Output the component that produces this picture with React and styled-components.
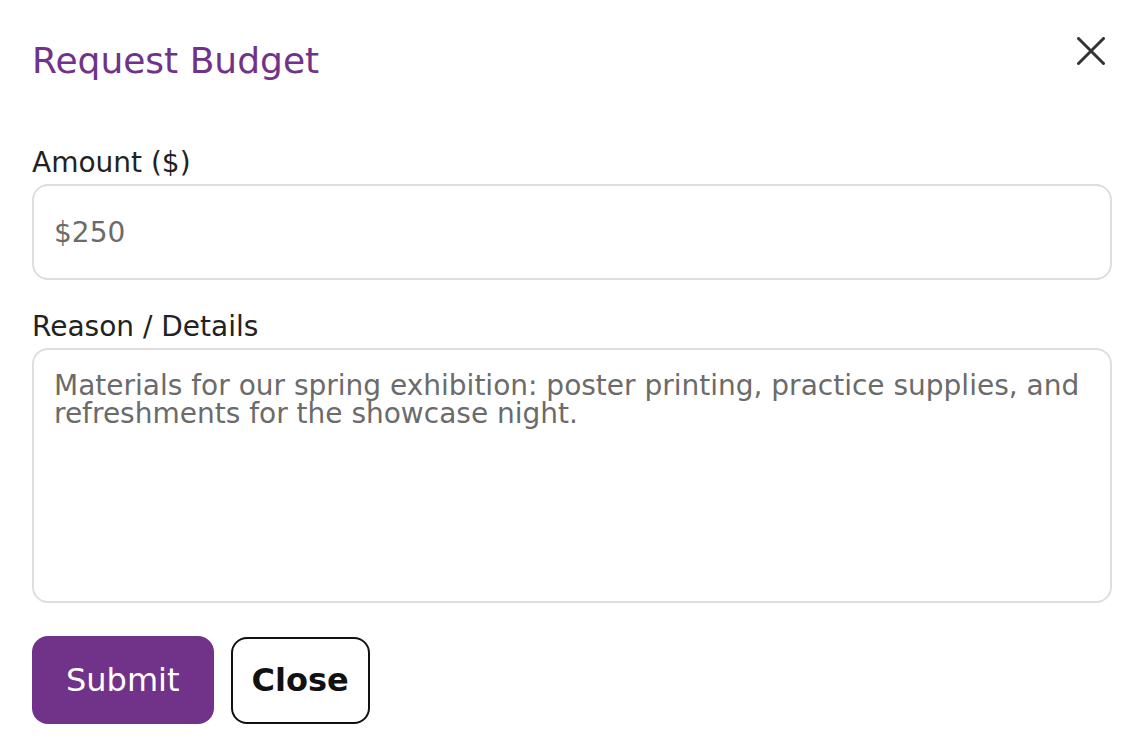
import React from 'react';
import styled, { createGlobalStyle } from 'styled-components';

const GlobalStyle = createGlobalStyle`
    body {
        margin: 0;
        background: #ffffff;
        font-family: "DejaVu Sans", "Liberation Sans", sans-serif;
    }
`;

export default function App(){

    return(
        <>
            <GlobalStyle />
            <ModalStyle>
                <HeaderStyle>
                    <TituloStyle>Request Budget</TituloStyle>
                    <CloseIconStyle aria-label="Close">
                        <svg width="28" height="28" viewBox="0 0 28 28">
                            <path d="M1.5 1.5 L26.5 26.5 M26.5 1.5 L1.5 26.5" stroke="#333333" strokeWidth="3" strokeLinecap="round" fill="none" />
                        </svg>
                    </CloseIconStyle>
                </HeaderStyle>
                <FormStyle>
                    <FieldStyle>
                        <LabelStyle htmlFor="amount">Amount ($)</LabelStyle>
                        <InputStyle id="amount" type="text" placeholder="$250" />
                    </FieldStyle>
                    <FieldStyle>
                        <LabelStyle htmlFor="reason">Reason / Details</LabelStyle>
                        <TextAreaStyle id="reason" placeholder="Materials for our spring exhibition: poster printing, practice supplies, and refreshments for the showcase night." />
                    </FieldStyle>
                    <ButtonsStyle>
                        <ButtonStyle type="button" primary>Submit</ButtonStyle>
                        <ButtonStyle type="button">Close</ButtonStyle>
                    </ButtonsStyle>
                </FormStyle>
            </ModalStyle>
        </>
    );
}

const ModalStyle = styled.div`
    display: flex;
    flex-direction: column;
    padding: 32px;
    box-sizing: border-box;
    width: 100%;
`;

const HeaderStyle = styled.div`
    display: flex;
    justify-content: space-between;
    align-items: flex-start;
`;

const TituloStyle = styled.h2`
    margin: 8px 0 0 0;
    font-size: 36px;
    font-weight: normal;
    line-height: normal;
    color: #703389;
`;

const CloseIconStyle = styled.button`
    display: flex;
    align-items: center;
    justify-content: center;
    width: 36px;
    height: 36px;
    margin: 1px 3px 0 0;
    padding: 0;
    border: none;
    background: transparent;
    cursor: pointer;
`;

const FormStyle = styled.form`
    display: flex;
    flex-direction: column;
    gap: 30px;
    margin-top: 65px;
`;

const FieldStyle = styled.div`
    display: flex;
    flex-direction: column;
    gap: 5px;
`;

const LabelStyle = styled.label`
    font-size: 28px;
    line-height: normal;
    color: #222222;
`;

const InputStyle = styled.input`
    box-sizing: border-box;
    width: 100%;
    height: 96px;
    padding: 0 20px;
    border: 2px solid #dedede;
    border-radius: 16px;
    font-family: "DejaVu Sans", "Liberation Sans", sans-serif;
    font-size: 28px;
    color: #222222;
    outline: none;
    &::placeholder { color: #6b6b6b; }
`;

const TextAreaStyle = styled.textarea`
    box-sizing: border-box;
    width: 100%;
    height: 255px;
    padding: 22px 20px;
    border: 2px solid #dedede;
    border-radius: 16px;
    font-family: "DejaVu Sans", "Liberation Sans", sans-serif;
    font-size: 28px;
    line-height: 1;
    color: #222222;
    resize: none;
    outline: none;
    &::placeholder { color: #6b6b6b; }
`;

const ButtonsStyle = styled.div`
    display: flex;
    align-items: center;
    gap: 17px;
    margin-top: 3px;
`;

const ButtonStyle = styled.button`
    box-sizing: border-box;
    height: ${p => p.primary ? '88px' : '87px'};
    padding: ${p => p.primary ? '0 34px' : '0 19px'};
    border: ${p => p.primary ? 'none' : '2px solid #111111'};
    border-radius: 16px;
    background: ${p => p.primary ? '#703389' : '#ffffff'};
    color: ${p => p.primary ? '#ffffff' : '#111111'};
    font-family: "DejaVu Sans", "Liberation Sans", sans-serif;
    font-size: 32px;
    font-weight: ${p => p.primary ? 'normal' : 'bold'};
    cursor: pointer;
`;
